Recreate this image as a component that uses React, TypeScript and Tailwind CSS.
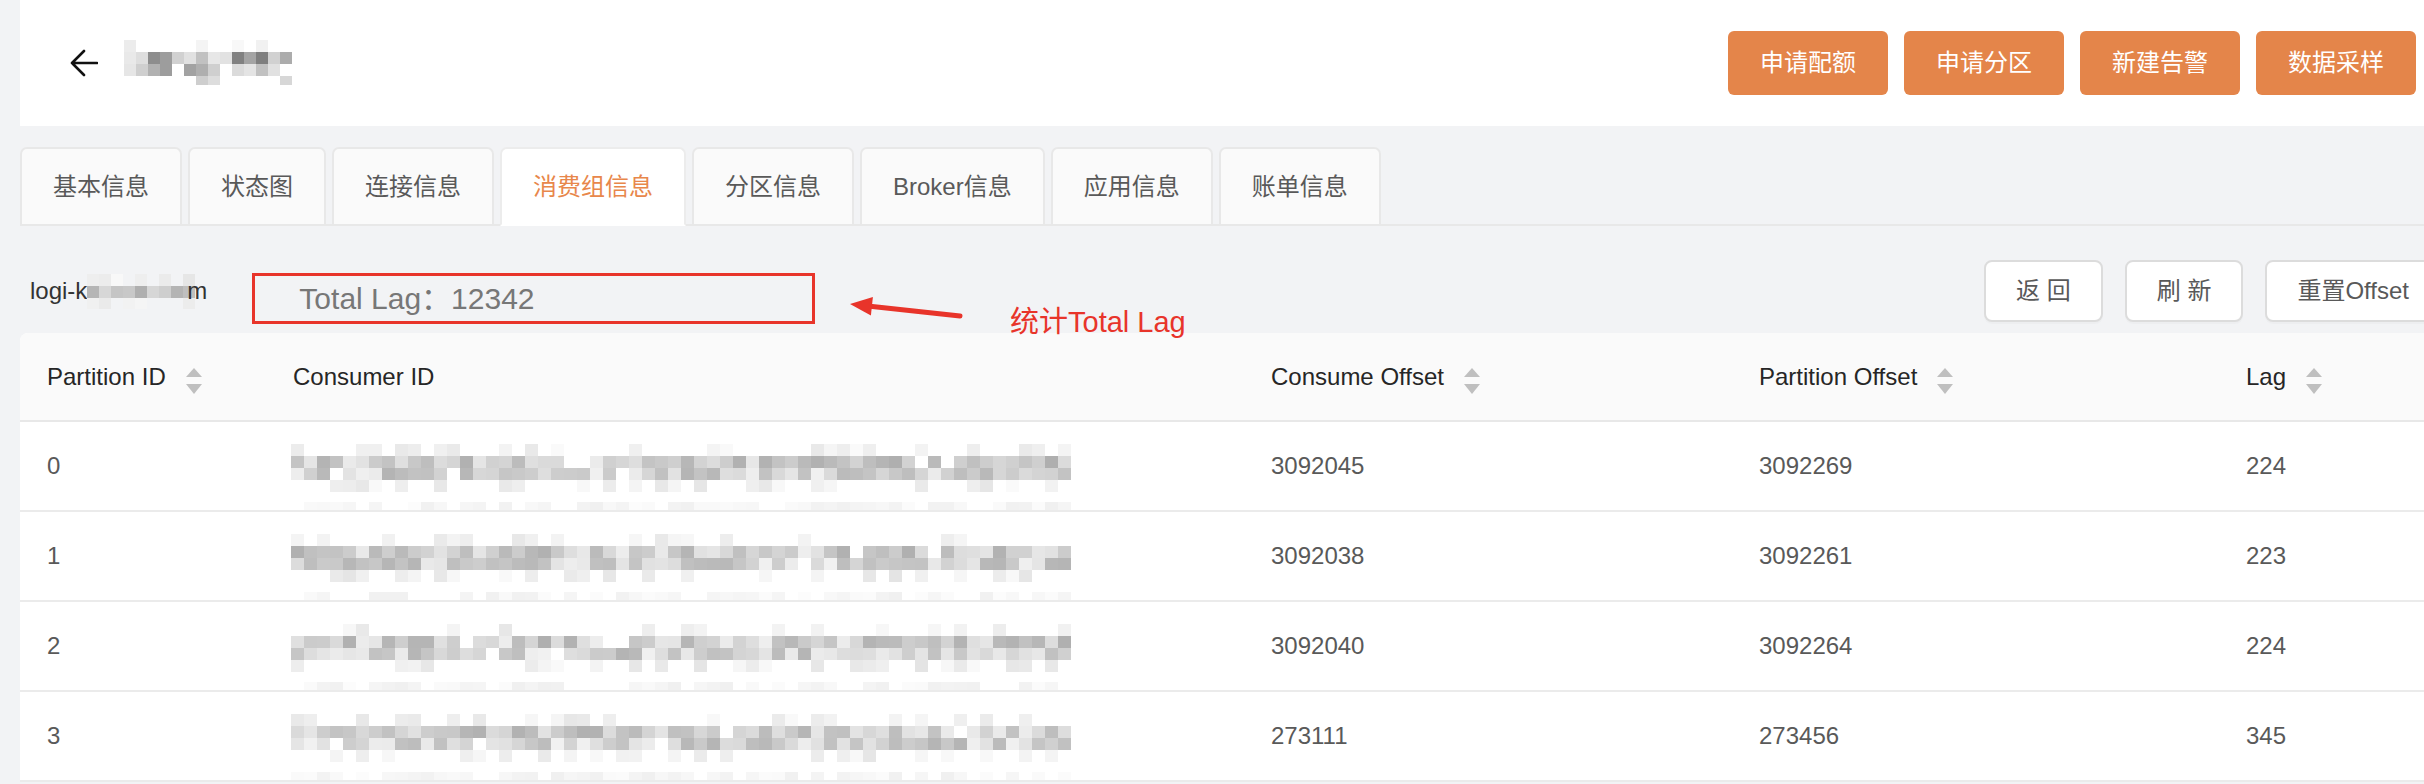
import React from "react";

const FONT = { fontFamily: '"Liberation Sans", "Noto Sans CJK SC", sans-serif' };

function rng(seed: number) {
  let s = seed | 0;
  return () => {
    s = (s + 0x6d2b79f5) | 0;
    let t = Math.imul(s ^ (s >>> 15), 1 | s);
    t = (t + Math.imul(t ^ (t >>> 7), 61 | t)) ^ t;
    return ((t ^ (t >>> 14)) >>> 0) / 4294967296;
  };
}

type Band = { y: number; h: number; min: number; max: number; density: number };

function Mosaic({ width, height, bands, bw, seed }: { width: number; height: number; bands: Band[]; bw: number; seed: number }) {
  const r = rng(seed);
  const rects: React.ReactElement[] = [];
  bands.forEach((b, bi) => {
    for (let x = 0; x < width; x += bw) {
      if (r() > b.density) continue;
      const g = Math.round(b.min + r() * (b.max - b.min));
      rects.push(<rect key={bi + "-" + x} x={x} y={b.y} width={bw} height={b.h} fill={`rgb(${g},${g},${g})`} />);
    }
  });
  return (
    <svg width={width} height={height} viewBox={`0 0 ${width} ${height}`} className="block shrink-0">
      {rects}
    </svg>
  );
}

function SortIcon() {
  return (
    <svg width="16" height="26" viewBox="0 0 16 26" className="ml-[20px] shrink-0 mt-[8px]">
      <path d="M8 0 L16 9 L0 9 Z" fill="#bfbfbf" />
      <path d="M0 16 L16 16 L8 26 Z" fill="#bfbfbf" />
    </svg>
  );
}

const tabs = ["基本信息", "状态图", "连接信息", "消费组信息", "分区信息", "Broker信息", "应用信息", "账单信息"];
const rows = [
  { p: "0", c: "3092045", o: "3092269", l: "224" },
  { p: "1", c: "3092038", o: "3092261", l: "223" },
  { p: "2", c: "3092040", o: "3092264", l: "224" },
  { p: "3", c: "273111", o: "273456", l: "345" },
];

const cols = "grid grid-cols-[246px_978px_488px_487px_1fr]";

export default function App() {
  return (
    <div className="w-[2424px] h-[784px] overflow-hidden bg-[#f2f3f5]" style={FONT}>
      {/* Header */}
      <div className="ml-[20px] h-[126px] bg-white flex items-center justify-between pr-[8px]">
        <div className="flex items-center pl-[50px]">
          <svg width="28" height="28" viewBox="0 0 28 28" className="shrink-0">
            <path d="M27 14 H2 M14 2 L2 14 L14 26" stroke="#111" strokeWidth="2.6" fill="none" strokeLinecap="round" strokeLinejoin="round" />
          </svg>
          <div className="ml-[26px]">
            <Mosaic
              width={168}
              height={46}
              bw={12}
              seed={7}
              bands={[
                { y: 0, h: 12, min: 235, max: 252, density: 0.25 },
                { y: 12, h: 12, min: 125, max: 235, density: 0.85 },
                { y: 24, h: 12, min: 145, max: 235, density: 0.9 },
                { y: 36, h: 9, min: 170, max: 240, density: 0.5 },
              ]}
            />
          </div>
        </div>
        <div className="flex gap-[16px]">
          {["申请配额", "申请分区", "新建告警", "数据采样"].map((t) => (
            <button key={t} className="w-[160px] h-[64px] rounded-[6px] bg-[#e4854a] text-white text-[24px] flex items-center justify-center">
              {t}
            </button>
          ))}
        </div>
      </div>

      {/* Tabs */}
      <div className="mt-[21px] ml-[20px] flex items-end gap-[6px] border-b-2 border-[#e8e8e8] h-[79px]">
        {tabs.map((t, i) => {
          const active = i === 3;
          return (
            <div
              key={t}
              className={
                "h-[79px] -mb-[2px] px-[31px] flex items-center rounded-t-[7px] border-2 text-[24px] " +
                (active
                  ? "bg-white border-[#ececec] border-b-white text-[#e8874b]"
                  : "bg-[#fafafa] border-[#e8e8e8] text-[#595959]")
              }
            >
              {t}
            </div>
          );
        })}
      </div>

      {/* Lower section */}
      <div className="ml-[20px] w-[2421px]">
        {/* Toolbar */}
        <div className="relative mt-[34px] h-[62px] flex items-center">
          <div className="pl-[10px] flex items-center text-[24px] text-[#333]">
            <span>logi-k</span>
            <Mosaic
              width={108}
              height={35}
              bw={12}
              seed={21}
              bands={[
                { y: 0, h: 12, min: 228, max: 250, density: 0.5 },
                { y: 12, h: 12, min: 170, max: 225, density: 0.95 },
                { y: 24, h: 11, min: 225, max: 248, density: 0.6 },
              ]}
            />
            <span className="-ml-[8px]">m</span>
          </div>
          <div className="ml-[45px] self-end -mb-[2px] w-[563px] h-[51px] border-[3px] border-[#e8342a] pl-[44px] flex items-center text-[30px] text-[#777]">
            Total Lag：12342
          </div>

          {/* annotation arrow */}
          <svg width="130" height="35" viewBox="0 0 130 35" className="absolute left-[820px] top-[31px]">
            <line x1="120" y1="25" x2="30" y2="15.2" stroke="#e8342a" strokeWidth="5" strokeLinecap="round" />
            <path d="M10 13 L32.9 6 L30.9 24.5 Z" fill="#e8342a" />
          </svg>
          <div className="absolute left-[990px] top-[45px] text-[29px] leading-[34px] text-[#e8342a] whitespace-nowrap">统计Total Lag</div>

          <div className="ml-auto flex gap-[22px]">
            {["返 回", "刷 新", "重置Offset"].map((t) => (
              <button
                key={t}
                className="h-[62px] px-[30px] rounded-[8px] border-2 border-[#dcdcdc] bg-white text-[24px] text-[#595959] shadow-[0_2px_0_rgba(0,0,0,0.02)] whitespace-pre"
              >
                {t}
              </button>
            ))}
          </div>
        </div>

        {/* Table */}
        <div className="mt-[11px] bg-white rounded-tl-[8px]">
          <div className={cols + " h-[89px] bg-[#fafafa] rounded-tl-[8px] border-b-2 border-[#e8e8e8] text-[24px] text-[#262626]"}>
            <div className="pl-[27px] flex items-center">
              Partition ID
              <SortIcon />
            </div>
            <div className="pl-[27px] flex items-center">Consumer ID</div>
            <div className="pl-[27px] flex items-center">
              Consume Offset
              <SortIcon />
            </div>
            <div className="pl-[27px] flex items-center">
              Partition Offset
              <SortIcon />
            </div>
            <div className="pl-[27px] flex items-center">
              Lag
              <SortIcon />
            </div>
          </div>
          {rows.map((r, i) => (
            <div key={i} className={cols + " h-[90px] border-b-2 border-[#ebebeb] text-[24px] text-[#595959]"}>
              <div className="pl-[27px] flex items-center">{r.p}</div>
              <div className="pl-[25px] flex items-start">
                <Mosaic
                  width={780}
                  height={88}
                  bw={13}
                  seed={100 + i * 17}
                  bands={[
                    { y: 22, h: 12, min: 230, max: 250, density: 0.35 },
                    { y: 34, h: 12, min: 175, max: 238, density: 0.95 },
                    { y: 46, h: 12, min: 180, max: 242, density: 0.95 },
                    { y: 58, h: 12, min: 228, max: 250, density: 0.45 },
                    { y: 80, h: 8, min: 240, max: 252, density: 0.7 },
                  ]}
                />
              </div>
              <div className="pl-[27px] flex items-center">{r.c}</div>
              <div className="pl-[27px] flex items-center">{r.o}</div>
              <div className="pl-[27px] flex items-center">{r.l}</div>
            </div>
          ))}
        </div>
      </div>
    </div>
  );
}
